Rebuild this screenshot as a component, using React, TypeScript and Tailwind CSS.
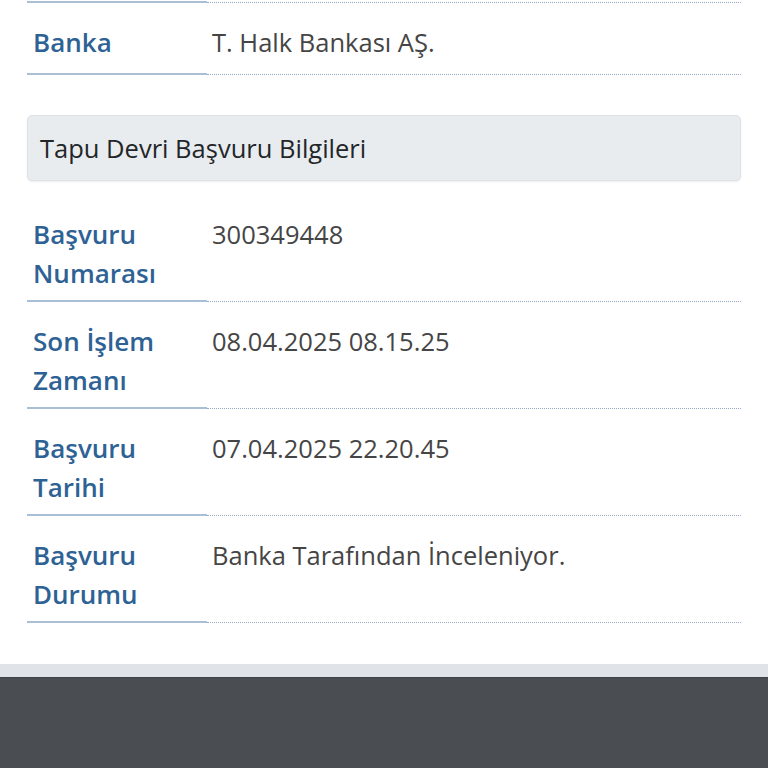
import React from "react";

type RowProps = { label: string[]; value: string; pb?: string };

function Row({ label, value, pb = "pb-[7px]" }: RowProps) {
  return (
    <div className="flex">
      <div
        className={`w-[180px] shrink-0 border-b-2 border-[#a9bfd6] pl-[6px] pt-[20px] ${pb} text-[26px] leading-[39px] font-semibold text-[#2e6294]`}
      >
        {label.map((l, i) => (
          <div key={i}>{l}</div>
        ))}
      </div>
      <div className="flex-1 border-b border-dotted border-[#93a9c4] pl-[5px] pt-[20px] text-[25.5px] leading-[39px] text-[#454545]">
        {value}
      </div>
    </div>
  );
}

export default function App() {
  return (
    <div
      className="min-h-[768px] flex flex-col bg-white"
      style={{ fontFamily: '"Open Sans", "Noto Sans", sans-serif' }}
    >
      <div className="px-[27px]">
        <div className="mt-[1px] flex">
          <div className="w-[180px] shrink-0 border-b-2 border-[#a9bfd6]" />
          <div className="flex-1 border-b border-dotted border-[#93a9c4]" />
        </div>
        <Row label={["Banka"]} value="T. Halk Bankası AŞ." pb="pb-[11px]" />
        <div className="mt-[40px] h-[66px] flex items-center rounded-[5px] border border-[#dfe3e7] bg-[#e9ecef] pl-[12px] shadow-[0_1px_2px_rgba(0,0,0,0.08)]">
          <span className="text-[25.5px] leading-[36px] text-[#222629]">
            Tapu Devri Başvuru Bilgileri
          </span>
        </div>
        <div className="mt-[14px]">
          <Row label={["Başvuru", "Numarası"]} value="300349448" />
          <Row label={["Son İşlem", "Zamanı"]} value="08.04.2025 08.15.25" />
          <Row label={["Başvuru", "Tarihi"]} value="07.04.2025 22.20.45" />
          <Row label={["Başvuru", "Durumu"]} value="Banka Tarafından İnceleniyor." />
        </div>
      </div>
      <div className="mt-[41px] h-[13px] bg-[#e0e4e8]" />
      <div className="flex-1 border-t border-[#3f4347] bg-[#4a4e52]" />
    </div>
  );
}
